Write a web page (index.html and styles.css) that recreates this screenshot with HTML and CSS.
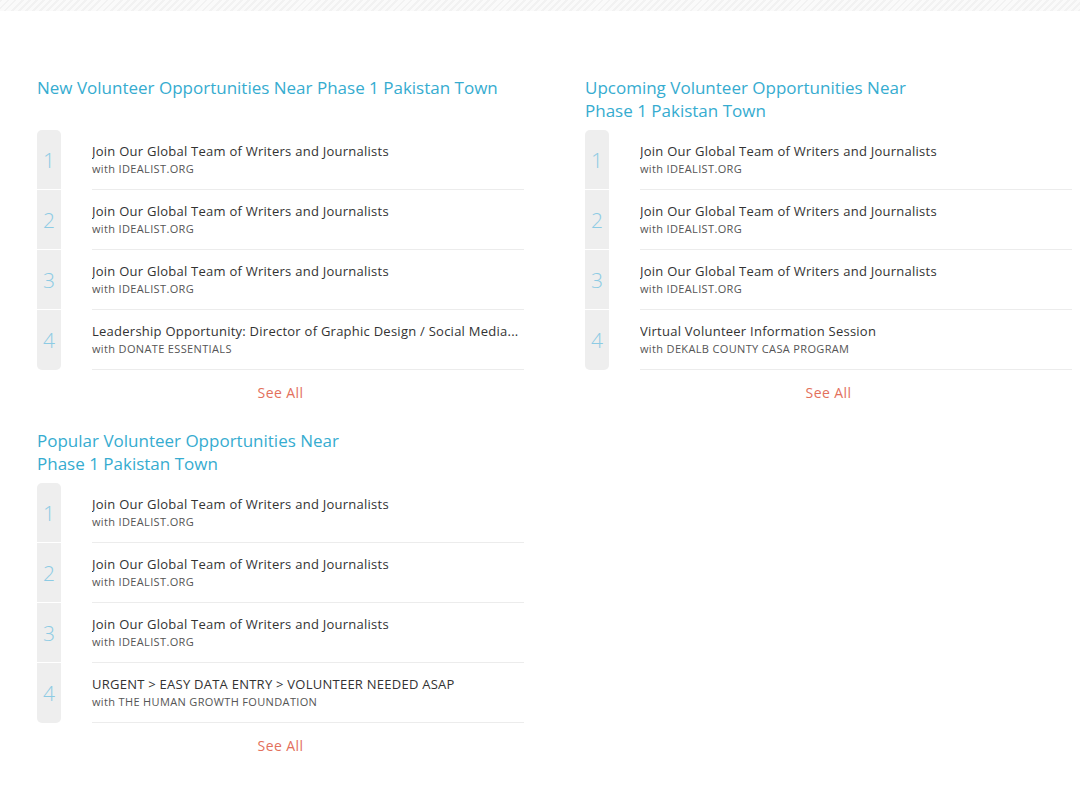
FILE: index.html
```html
<!DOCTYPE html>
<html>

<head>
    <link rel="stylesheet" href="styles.css">
</head>

<body>

    <div class="top-band"></div>

    <div class="opps-grid">

        <div class="opps-section">
            <h2 class="opps-title">New Volunteer Opportunities Near Phase 1 Pakistan Town</h2>
            <ul class="opps-list">
                <li class="opp-row">
                    <span class="opp-num">1</span>
                    <div class="opp-body">
                        <span class="opp-name">Join Our Global Team of Writers and Journalists</span>
                        <span class="opp-org">with IDEALIST.ORG</span>
                    </div>
                </li>
                <li class="opp-row">
                    <span class="opp-num">2</span>
                    <div class="opp-body">
                        <span class="opp-name">Join Our Global Team of Writers and Journalists</span>
                        <span class="opp-org">with IDEALIST.ORG</span>
                    </div>
                </li>
                <li class="opp-row">
                    <span class="opp-num">3</span>
                    <div class="opp-body">
                        <span class="opp-name">Join Our Global Team of Writers and Journalists</span>
                        <span class="opp-org">with IDEALIST.ORG</span>
                    </div>
                </li>
                <li class="opp-row">
                    <span class="opp-num">4</span>
                    <div class="opp-body">
                        <span class="opp-name">Leadership Opportunity: Director of Graphic Design / Social Media...</span>
                        <span class="opp-org">with DONATE ESSENTIALS</span>
                    </div>
                </li>
            </ul>
            <a class="see-all" href="#">See All</a>
        </div>

        <div class="opps-section">
            <h2 class="opps-title narrow">Upcoming Volunteer Opportunities Near Phase 1 Pakistan Town</h2>
            <ul class="opps-list">
                <li class="opp-row">
                    <span class="opp-num">1</span>
                    <div class="opp-body">
                        <span class="opp-name">Join Our Global Team of Writers and Journalists</span>
                        <span class="opp-org">with IDEALIST.ORG</span>
                    </div>
                </li>
                <li class="opp-row">
                    <span class="opp-num">2</span>
                    <div class="opp-body">
                        <span class="opp-name">Join Our Global Team of Writers and Journalists</span>
                        <span class="opp-org">with IDEALIST.ORG</span>
                    </div>
                </li>
                <li class="opp-row">
                    <span class="opp-num">3</span>
                    <div class="opp-body">
                        <span class="opp-name">Join Our Global Team of Writers and Journalists</span>
                        <span class="opp-org">with IDEALIST.ORG</span>
                    </div>
                </li>
                <li class="opp-row">
                    <span class="opp-num">4</span>
                    <div class="opp-body">
                        <span class="opp-name">Virtual Volunteer Information Session</span>
                        <span class="opp-org">with DEKALB COUNTY CASA PROGRAM</span>
                    </div>
                </li>
            </ul>
            <a class="see-all" href="#">See All</a>
        </div>

        <div class="opps-section">
            <h2 class="opps-title narrow">Popular Volunteer Opportunities Near Phase 1 Pakistan Town</h2>
            <ul class="opps-list">
                <li class="opp-row">
                    <span class="opp-num">1</span>
                    <div class="opp-body">
                        <span class="opp-name">Join Our Global Team of Writers and Journalists</span>
                        <span class="opp-org">with IDEALIST.ORG</span>
                    </div>
                </li>
                <li class="opp-row">
                    <span class="opp-num">2</span>
                    <div class="opp-body">
                        <span class="opp-name">Join Our Global Team of Writers and Journalists</span>
                        <span class="opp-org">with IDEALIST.ORG</span>
                    </div>
                </li>
                <li class="opp-row">
                    <span class="opp-num">3</span>
                    <div class="opp-body">
                        <span class="opp-name">Join Our Global Team of Writers and Journalists</span>
                        <span class="opp-org">with IDEALIST.ORG</span>
                    </div>
                </li>
                <li class="opp-row">
                    <span class="opp-num">4</span>
                    <div class="opp-body">
                        <span class="opp-name">URGENT &gt; EASY DATA ENTRY &gt; VOLUNTEER NEEDED ASAP</span>
                        <span class="opp-org">with THE HUMAN GROWTH FOUNDATION</span>
                    </div>
                </li>
            </ul>
            <a class="see-all" href="#">See All</a>
        </div>

    </div>

</body>

</html>
```

FILE: styles.css
```css
body {
    margin: 0;
    font-family: "Open Sans", Arial, sans-serif;
    background-color: #fff;
    color: #333;
}

.top-band {
    height: 11px;
    background: repeating-linear-gradient(135deg, #f2f2f2 0, #f2f2f2 2px, #fafafa 2px, #fafafa 5px);
}

.opps-grid {
    display: grid;
    grid-template-columns: 487px 487px;
    column-gap: 61px;
    row-gap: 26px;
    padding: 65px 0 0 37px;
}

.opps-section {
    display: flex;
    flex-direction: column;
}

.opps-title {
    margin: 0 0 8px;
    min-height: 46px;
    font-size: 17px;
    line-height: 23px;
    font-weight: 400;
    color: #36acd0;
}

.opps-title.narrow {
    max-width: 340px;
}

.opps-list {
    margin: 0;
    padding: 0;
    list-style: none;
}

.opp-row {
    display: flex;
    height: 60px;
}

.opp-num {
    flex: 0 0 24px;
    display: flex;
    align-items: center;
    justify-content: center;
    background-color: #eeeeee;
    border-bottom: 1px solid #fff;
    color: #8ccbe4;
    font-size: 21px;
    font-weight: 300;
}

.opp-row:first-child .opp-num {
    border-radius: 5px 5px 0 0;
}

.opp-row:last-child .opp-num {
    border-radius: 0 0 5px 5px;
    border-bottom: none;
}

.opp-body {
    flex: 1;
    min-width: 0;
    margin-left: 31px;
    display: flex;
    flex-direction: column;
    justify-content: center;
    gap: 1px;
    border-bottom: 1px solid #ececec;
    padding-bottom: 1px;
}

.opp-name {
    font-size: 13px;
    letter-spacing: 0.25px;
    color: #333;
    white-space: nowrap;
    overflow: hidden;
    text-overflow: ellipsis;
}

.opp-org {
    font-size: 11px;
    letter-spacing: 0.35px;
    color: #555;
}

.see-all {
    align-self: center;
    margin-top: 13px;
    font-size: 14px;
    letter-spacing: 0.4px;
    line-height: 20px;
    color: #e3705c;
    text-decoration: none;
}
```
